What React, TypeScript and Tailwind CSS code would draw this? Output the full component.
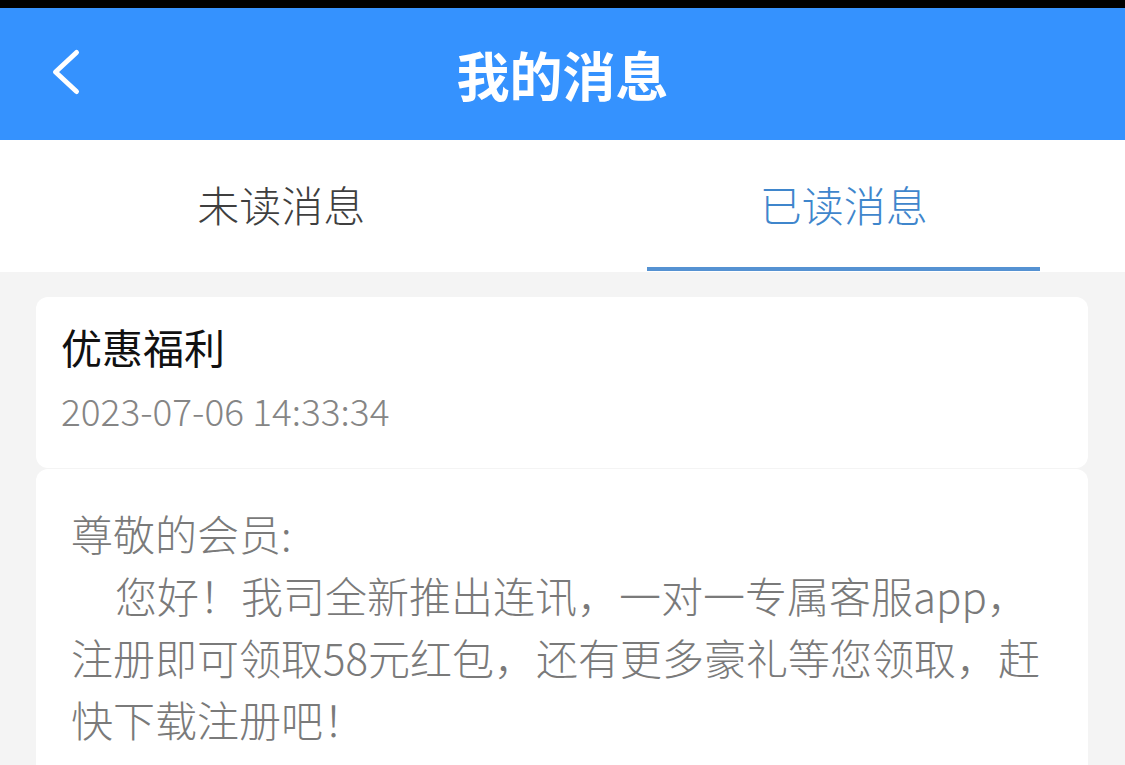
import { useState } from 'react';

const cjk = { fontFamily: '"Noto Sans CJK SC", "Noto Sans", sans-serif' };

export default function App() {
  const [tab, setTab] = useState(1);
  const tabs = ['未读消息', '已读消息'];

  return (
    <div className="h-[765px] w-full overflow-hidden bg-[#f4f4f4]" style={cjk}>
      {/* status bar strip */}
      <div className="h-[8px] bg-black" />

      {/* Header */}
      <header className="relative flex h-[132px] items-center justify-center bg-[#3592fe]">
        <button className="absolute left-[51px] top-[40px] h-[48px] w-[30px]">
          <svg width="30" height="48" viewBox="0 0 30 48" fill="none">
            <path d="M25.5 4.5L4.5 24L25.5 43.5" stroke="white" strokeWidth="5" strokeLinecap="round" strokeLinejoin="round" />
          </svg>
        </button>
        <h1 className="text-[53px] font-bold leading-none text-white">我的消息</h1>
      </header>

      {/* Tabs */}
      <div className="flex h-[132px] bg-white">
        {tabs.map((t, i) => (
          <button key={t} onClick={() => setTab(i)} className="flex h-full flex-1 flex-col items-center">
            <span
              className={`flex flex-1 items-center text-[42px] font-light leading-none ${
                tab === i ? 'text-[#3f86cc]' : 'text-[#3f3f3f]'
              }`}
            >
              {t}
            </span>
            <span className={`mb-[1px] h-[4px] w-[393px] ${tab === i ? 'bg-[#5592d2]' : 'bg-transparent'}`} />
          </button>
        ))}
      </div>

      {/* List */}
      <main className="px-[36px] pt-[25px] pr-[37px]">
        <div className="h-[171px] rounded-[12px] bg-white px-[25px] pt-[24px]">
          <div className="text-[41px] leading-[50px] text-[#111111]">优惠福利</div>
          <div className="mt-[17px] text-[37px] font-light leading-[44px] text-[#858585]">2023-07-06 14:33:34</div>
        </div>

        <div className="mt-[1px] h-[400px] rounded-t-[12px] bg-white px-[35px] pt-[33px] text-[42px] font-light leading-[62px] text-[#7a7a7a]">
          <p>尊敬的会员:</p>
          <p className="indent-[44px]">您好！我司全新推出连讯，一对一专属客服app，注册即可领取58元红包，还有更多豪礼等您领取，赶快下载注册吧！</p>
        </div>
      </main>
    </div>
  );
}
